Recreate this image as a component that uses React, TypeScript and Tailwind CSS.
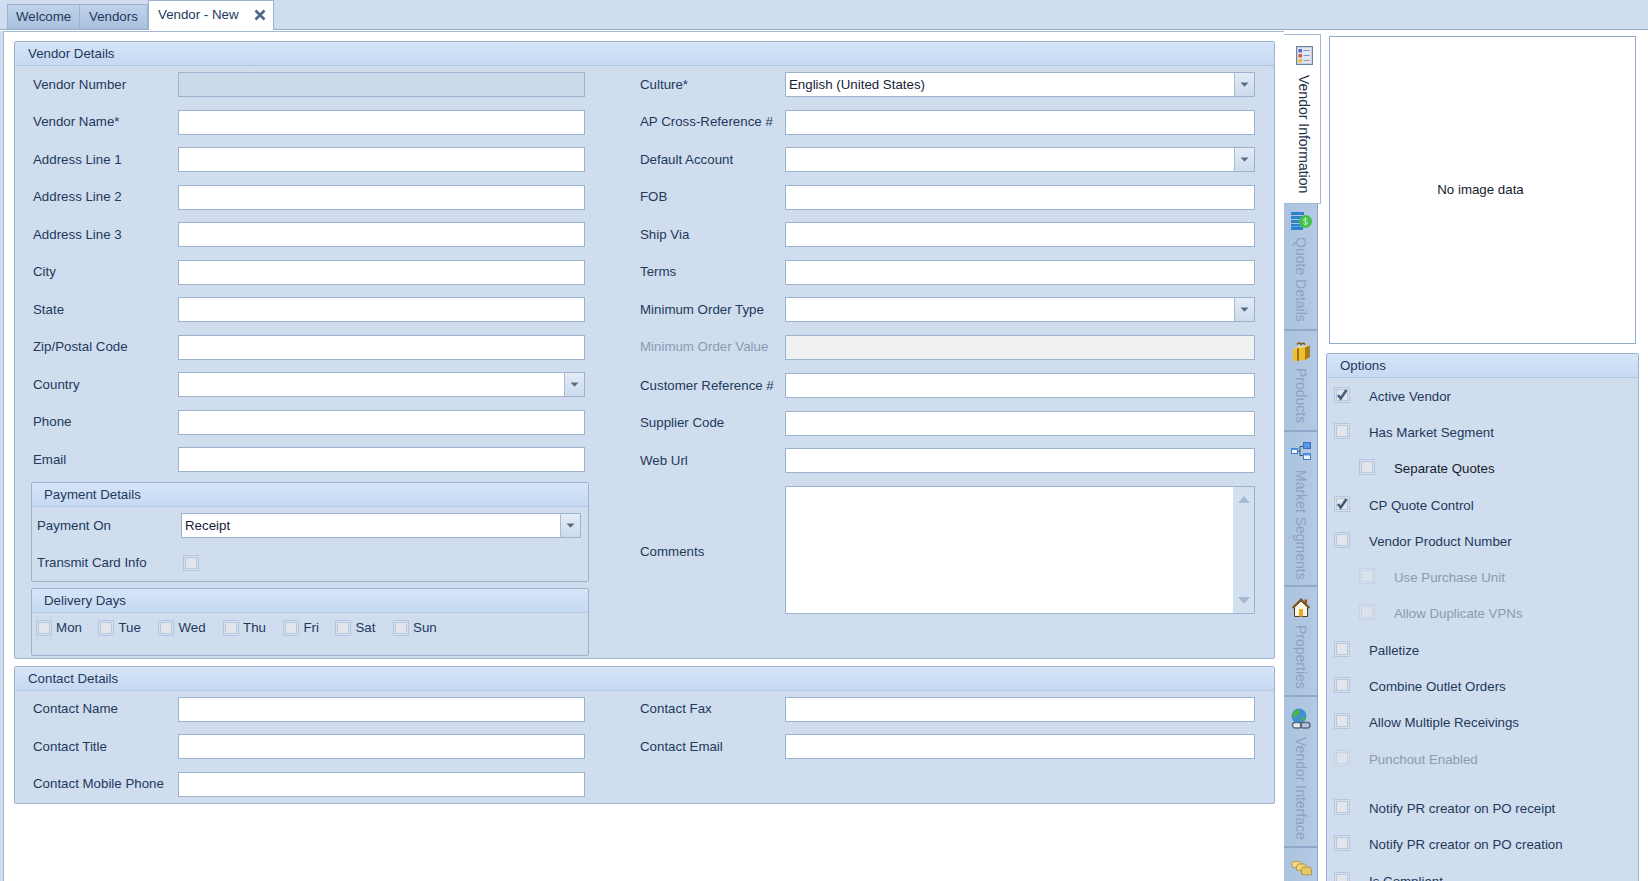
import React from "react";

const LABEL = "text-[#1e395b]";

function Arrow() {
  return (
    <svg width="9" height="5" viewBox="0 0 9 5" className="block">
      <path d="M0.5 0.5h8L4.5 4.7z" fill="#5b6b84" />
    </svg>
  );
}

function Input({ kind = "normal", value, dropdown }: { kind?: "normal" | "readonly" | "disabled"; value?: string; dropdown?: boolean }) {
  const bg = kind === "readonly" ? "bg-[#cbd9ea]" : kind === "disabled" ? "bg-[#eff0f2]" : "bg-white";
  return (
    <div className={`flex h-[25px] w-full min-w-0 items-stretch border border-[#9db2cf] ${bg}`}>
      <div className="flex-1 pl-[3px] text-[13.3px] leading-[23px] text-[#14233a]">{value}</div>
      {dropdown && (
        <div className="flex w-[20px] items-center justify-center border-l border-[#a9bcd6] bg-gradient-to-b from-[#e3ebf6] to-[#cddbed]">
          <Arrow />
        </div>
      )}
    </div>
  );
}

function Row({ label, children, w = "w-[145px]", muted }: { label: string; children: React.ReactNode; w?: string; muted?: boolean }) {
  return (
    <div className="flex h-[37.5px] items-center">
      <div className={`${w} shrink-0 whitespace-nowrap text-[13.3px] ${muted ? "text-[#8b9bb2]" : LABEL}`}>{label}</div>
      {children}
    </div>
  );
}

function Check({ checked, faded }: { checked?: boolean; faded?: boolean }) {
  return (
    <div className={`flex h-[16px] w-[16px] shrink-0 items-center justify-center border ${faded ? "border-[#c3d2e6]" : "border-[#b3c7e2]"} bg-[#d6e1f0]`}>
      <div className={`flex h-[12px] w-[12px] items-center justify-center border ${faded ? "border-[#c9d2de] bg-[#dde3ec]" : "border-[#bcc7d6] bg-[#e2e6ec]"}`}>
        {checked && (
          <svg width="14" height="14" viewBox="0 0 14 14" className="block shrink-0">
            <path d="M3 7l2.700 3.500L11.500 2" fill="none" stroke="#465c7e" strokeWidth="2.600" />
          </svg>
        )}
      </div>
    </div>
  );
}

function Group({ title, titlePad, cls, children }: { title: string; titlePad: string; cls: string; children: React.ReactNode }) {
  return (
    <section className={`flex flex-col rounded-[2px] border border-[#9cb2d0] bg-[#cfddee] ${cls}`}>
      <div className={`h-[24px] shrink-0 border-b border-[#b4c8e2] bg-gradient-to-b from-[#d6e5f8] to-[#c5d9f1] ${titlePad} text-[13.3px] leading-[23px] ${LABEL}`}>{title}</div>
      {children}
    </section>
  );
}

function IconList() {
  return (
    <svg width="17" height="19" viewBox="0 0 17 19">
      <rect x="0.5" y="0.5" width="16" height="18" fill="#c6d0de" stroke="#6f7f95" />
      <rect x="2" y="2" width="13" height="15" fill="#dfe6ef" />
      <rect x="2.5" y="3" width="3.5" height="3.5" fill="#5a62dc" />
      <rect x="2.5" y="8" width="3.5" height="3.5" fill="#e2574c" />
      <rect x="2.5" y="13" width="3.5" height="3.5" fill="#e8c33a" />
      <path d="M7.5 4.5h6M7.5 9.5h6M7.5 14.5h6" stroke="#8796ad" strokeWidth="1.2" />
    </svg>
  );
}
function IconQuote() {
  return (
    <svg width="21" height="18" viewBox="0 0 21 18">
      <path d="M0 0h13v3H0zM0 4h11v3H0zM0 8h10v3H0zM0 12h10v2.500H0zM0 15h12v3H0z" fill="#2b83c9" />
      <circle cx="14.500" cy="9.500" r="6.500" fill="#45c04a" />
      <path d="M16.500 7.200c-1-1-4-.8-4 .8s4 1.200 4 3-3 1.600-4 .6M14.500 5.500v8" fill="none" stroke="#b9efbb" strokeWidth="1" />
    </svg>
  );
}
function IconGift() {
  return (
    <svg width="19" height="19" viewBox="0 0 19 19">
      <path d="M1 7l12-2v13l-12 1z" fill="#efbe2a" />
      <path d="M13 5l5-1.500V15l-5 3z" fill="#a87c16" />
      <path d="M1 7l12-2 5-1.500L7 4.500z" fill="#f7dd72" />
      <path d="M6 6.200v12.500" stroke="#9c7012" strokeWidth="2" />
      <path d="M5 2.500c1-2 4-2 4 .5M9 3c1-2.500 4-2 3.500 0" fill="none" stroke="#7f5b13" strokeWidth="1.500" />
    </svg>
  );
}
function IconNet() {
  return (
    <svg width="20" height="18" viewBox="0 0 20 18">
      <path d="M5 9h4M9 4.500v9M9 4.500h4M9 13.500h4" stroke="#33507a" strokeWidth="1" fill="none" />
      <rect x="0.500" y="6.500" width="6" height="5" fill="#f2f5f9" stroke="#3f79c9" />
      <rect x="12.500" y="0.500" width="7" height="6" fill="#5b96e6" stroke="#3a70bd" />
      <rect x="12.500" y="11.500" width="7" height="6" fill="#eef2f8" stroke="#3f79c9" />
      <path d="M12.500 11.500h7v2h-7zM0.500 6.500h6v1.500h-6z" fill="#5b96e6" />
    </svg>
  );
}
function IconHome() {
  return (
    <svg width="18" height="19" viewBox="0 0 18 19">
      <path d="M12.500 1.500h2.500v5h-2.500z" fill="#a8482b" />
      <path d="M2.500 9L9 3l6.500 6v9.500h-13z" fill="#fdf6e4" stroke="#4b3a22" />
      <path d="M0.500 10L9 1.500 17.500 10" fill="none" stroke="#7a5a2a" strokeWidth="2" />
      <rect x="7" y="11" width="4" height="7.500" fill="#e6a92c" />
    </svg>
  );
}
function IconGlobe() {
  return (
    <svg width="20" height="21" viewBox="0 0 20 21">
      <circle cx="8" cy="8" r="7.500" fill="#3f8fd8" />
      <path d="M3 3c2-1.500 5-2 6 0s-1 3-2 4-1 3-3 3-3-4-1-7zM11 9c2-1 4 0 3 2s-3 3-4 1 0-2 1-3z" fill="#4fb04e" />
      <rect x="1.500" y="14.500" width="9" height="5.500" rx="2.700" fill="#e8ecf1" stroke="#5d6b80" strokeWidth="1.400" />
      <rect x="9.500" y="14.500" width="9.500" height="5.500" rx="2.700" fill="none" stroke="#5d6b80" strokeWidth="1.400" />
    </svg>
  );
}
function IconCoins() {
  return (
    <svg width="21" height="15" viewBox="0 0 21 15">
      <path d="M0.500 2.500L2 0.500h7L10.500 3v4L2 6.500z" fill="#f2dc8c" stroke="#a98e3c" strokeWidth="0.800" />
      <path d="M5.500 5L7 3h7l1.500 2.500v4.500l-10-.5z" fill="#eed37a" stroke="#a98e3c" strokeWidth="0.800" />
      <path d="M10.500 8L12 6h7l1.500 2.500v5.500l-10-.5z" fill="#e6c765" stroke="#a98e3c" strokeWidth="0.800" />
    </svg>
  );
}

const tabs = [
  { h: "h-[127px]", top: "pt-[8px]", gap: "mt-[7px]", label: "Quote Details", icon: <IconQuote /> },
  { h: "h-[101px]", top: "pt-[11px]", gap: "mt-[7px]", label: "Products", icon: <IconGift /> },
  { h: "h-[155px]", top: "pt-[10px]", gap: "mt-[10px]", label: "Market Segments", icon: <IconNet /> },
  { h: "h-[110px]", top: "pt-[11px]", gap: "mt-[8px]", label: "Properties", icon: <IconHome /> },
  { h: "h-[151px]", top: "pt-[11px]", gap: "mt-[8px]", label: "Vendor Interface", icon: <IconGlobe /> },
  { h: "h-[60px]", top: "pt-[13px]", gap: "mt-0", label: "", icon: <IconCoins /> },
];

const leftRows: { label: string; kind?: "readonly"; dropdown?: boolean }[] = [
  { label: "Vendor Number", kind: "readonly" },
  { label: "Vendor Name*" },
  { label: "Address Line 1" },
  { label: "Address Line 2" },
  { label: "Address Line 3" },
  { label: "City" },
  { label: "State" },
  { label: "Zip/Postal Code" },
  { label: "Country", dropdown: true },
  { label: "Phone" },
  { label: "Email" },
];

const days = [
  { d: "Mon", w: "w-[62.4px]" },
  { d: "Tue", w: "w-[60px]" },
  { d: "Wed", w: "w-[64.6px]" },
  { d: "Thu", w: "w-[60.4px]" },
  { d: "Fri", w: "w-[52px]" },
  { d: "Sat", w: "w-[57.6px]" },
  { d: "Sun", w: "w-[60px]" },
];

const options: { t: string; c?: boolean; tone?: "dark" | "off"; sub?: boolean; gap?: boolean }[] = [
  { t: "Active Vendor", c: true },
  { t: "Has Market Segment" },
  { t: "Separate Quotes", sub: true, tone: "dark" },
  { t: "CP Quote Control", c: true },
  { t: "Vendor Product Number" },
  { t: "Use Purchase Unit", sub: true, tone: "off" },
  { t: "Allow Duplicate VPNs", sub: true, tone: "off" },
  { t: "Palletize" },
  { t: "Combine Outlet Orders" },
  { t: "Allow Multiple Receivings" },
  { t: "Punchout Enabled", tone: "off" },
  { t: "Notify PR creator on PO receipt", gap: true },
  { t: "Notify PR creator on PO creation" },
  { t: "Is Compliant" },
];

export default function App() {
  return (
    <div className="flex h-[881px] w-[1648px] flex-col overflow-hidden bg-white font-['Liberation_Sans',sans-serif] antialiased">
      <header className="flex h-[30px] shrink-0 items-end border-b border-[#93abcb] bg-[#cfddee] pl-[7px] text-[13.3px]">
        <div className="flex h-[25px] w-[73px] items-center border border-b-0 border-[#9cb2d0] bg-gradient-to-b from-[#bfd2ea] to-[#a9c1de] pl-[8px] text-[#1e395b]">Welcome</div>
        <div className="flex h-[25px] w-[68px] items-center border border-b-0 border-l-0 border-[#9cb2d0] bg-gradient-to-b from-[#bfd2ea] to-[#a9c1de] pl-[9px] text-[#1e395b]">Vendors</div>
        <div className="relative top-[1px] flex h-[30px] w-[126px] items-center border border-b-0 border-[#9cb2d0] bg-white pb-[1px] pl-[9px] text-[#1e395b]">
          Vendor - New
          <svg width="12" height="12" viewBox="0 0 12 12" className="ml-[15px]">
            <path d="M1.500 1.500l9 9M10.500 1.500l-9 9" stroke="#4f6585" strokeWidth="2.600" />
          </svg>
        </div>
      </header>

      <div className="mt-[1px] flex min-h-0 flex-1">
        <div className="w-[3px] shrink-0 bg-[#cfddee]" />
        <main className="flex w-[1281px] shrink-0 flex-col gap-[6.5px] border-l border-t border-[#a3b8d4] pl-[10px] pr-[9px] pt-[9px]">
          <Group title="Vendor Details" titlePad="pl-[13px]" cls="h-[618px]">
            <div className="flex">
              <div className="w-[577px] shrink-0">
                <div className="pl-[18px]">
                  {leftRows.map((r) => (
                    <Row key={r.label} label={r.label}>
                      <div className="w-[407px]"><Input kind={r.kind} dropdown={r.dropdown} /></div>
                    </Row>
                  ))}
                </div>
                <div className="ml-[16px] mt-[3.5px] w-[558px]">
                  <Group title="Payment Details" titlePad="pl-[12px]" cls="h-[100px]">
                    <div className="pl-[5px]">
                      <Row label="Payment On" w="w-[144px]">
                        <div className="w-[400px]"><Input value="Receipt" dropdown /></div>
                      </Row>
                      <Row label="Transmit Card Info" w="w-[146px]">
                        <Check />
                      </Row>
                    </div>
                  </Group>
                  <div className="mt-[6px]">
                    <Group title="Delivery Days" titlePad="pl-[12px]" cls="h-[68px]">
                      <div className="flex pl-[3.6px] pt-[5px]">
                        {days.map((x) => (
                          <div key={x.d} className={`flex ${x.w} items-center gap-[4.5px] text-[13.3px] ${LABEL}`}>
                            <Check />
                            <span>{x.d}</span>
                          </div>
                        ))}
                      </div>
                    </Group>
                  </div>
                </div>
              </div>
              <div className="min-w-0 flex-1 pl-[48px] pr-[19px]">
                <Row label="Culture*"><Input value="English (United States)" dropdown /></Row>
                <Row label="AP Cross-Reference #"><Input /></Row>
                <Row label="Default Account"><Input dropdown /></Row>
                <Row label="FOB"><Input /></Row>
                <Row label="Ship Via"><Input /></Row>
                <Row label="Terms"><Input /></Row>
                <Row label="Minimum Order Type"><Input dropdown /></Row>
                <Row label="Minimum Order Value" muted><Input kind="disabled" /></Row>
                <div className="mt-[1px]">
                  <Row label="Customer Reference #"><Input /></Row>
                  <Row label="Supplier Code"><Input /></Row>
                  <Row label="Web Url"><Input /></Row>
                </div>
                <div className="mt-[6px] flex items-center">
                  <div className={`w-[145px] shrink-0 pt-[4px] text-[13.3px] ${LABEL}`}>Comments</div>
                  <div className="flex h-[128px] flex-1 border border-[#9db2cf] bg-white">
                    <div className="flex-1" />
                    <div className="flex w-[21px] flex-col items-center justify-between bg-[#d3e0f0] py-[9px]">
                      <svg width="12" height="7" viewBox="0 0 12 7"><path d="M6 0l6 7H0z" fill="#a9b9d0" /></svg>
                      <svg width="12" height="7" viewBox="0 0 12 7"><path d="M0 0h12L6 7z" fill="#a9b9d0" /></svg>
                    </div>
                  </div>
                </div>
              </div>
            </div>
          </Group>

          <Group title="Contact Details" titlePad="pl-[13px]" cls="h-[138px]">
            <div className="flex">
              <div className="w-[577px] shrink-0 pl-[18px]">
                {["Contact Name", "Contact Title", "Contact Mobile Phone"].map((l) => (
                  <Row key={l} label={l}>
                    <div className="w-[407px]"><Input /></div>
                  </Row>
                ))}
              </div>
              <div className="min-w-0 flex-1 pl-[48px] pr-[19px]">
                <Row label="Contact Fax"><Input /></Row>
                <Row label="Contact Email"><Input /></Row>
              </div>
            </div>
          </Group>
        </main>

        <nav className="w-[37px] shrink-0 pt-[4px]">
          <div className="-mt-[1px] flex h-[170px] w-[37px] flex-col items-center border border-l-0 border-[#a3b8d4] bg-white pl-[4px] pt-[11px]">
            <IconList />
            <span className="mt-[10px] text-[14px] leading-[18px] text-[#1f2f47] [writing-mode:vertical-rl]">Vendor Information</span>
          </div>
          {tabs.map((t, i) => (
            <div key={i} className={`flex ${t.h} w-[34px] flex-col items-center border-b-2 border-r border-[#8fa9ca] bg-gradient-to-r from-[#abc2de] to-[#b4c9e3] pl-[1px] ${t.top}`}>
              {t.icon}
              {t.label && (
                <span className={`${t.gap} text-[14px] leading-[18px] text-[#8ea2bd] [writing-mode:vertical-rl]`}>{t.label}</span>
              )}
            </div>
          ))}
        </nav>

        <aside className="flex w-[327px] shrink-0 flex-col pl-[5px] pt-[5px]">
          <div className="ml-[3px] flex h-[308px] w-[307px] shrink-0 items-center justify-center border border-[#93abcb] bg-white pr-[4px] text-[13.3px] text-[#16202e]">
            No image data
          </div>
          <div className="mt-[9px] h-[600px] w-[313px] shrink-0">
            <Group title="Options" titlePad="pl-[13px]" cls="h-full">
              <div className="-mt-[1.5px] pl-[7px]">
                {options.map((o) => (
                  <div key={o.t} className={`flex h-[36.3px] items-center ${o.sub ? "pl-[25px]" : ""} ${o.gap ? "mt-[13px]" : ""}`}>
                    <Check checked={o.c} faded={o.tone === "off"} />
                    <span className={`ml-[19px] translate-y-[1.500px] text-[13.3px] ${o.tone === "dark" ? "text-[#131c2b]" : o.tone === "off" ? "text-[#8b9bb2]" : LABEL}`}>{o.t}</span>
                  </div>
                ))}
              </div>
            </Group>
          </div>
        </aside>
      </div>
    </div>
  );
}
